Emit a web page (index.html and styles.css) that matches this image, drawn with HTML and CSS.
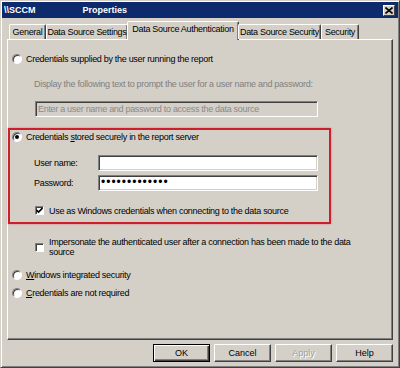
FILE: index.html
```html
<!DOCTYPE html>
<html lang="en">
<head>
    <meta charset="UTF-8">
    <title>\\SCCM Properties</title>
    <link rel="stylesheet" href="styles.css">
</head>
<body>
    <div class="window">
        <div class="titlebar">
            <span class="title-path">\\SCCM</span>
            <span class="title-text">Properties</span>
            <span class="close-btn">
                <svg width="8" height="7" viewBox="0 0 8 7"><path d="M0.5 0.5 L7.5 6.5 M7.5 0.5 L0.5 6.5" stroke="#000" stroke-width="1.6"/></svg>
            </span>
        </div>

        <div class="tabs">
            <div class="tab tab-general">General</div>
            <div class="tab tab-settings">Data Source Settings</div>
            <div class="tab tab-auth active">Data Source Authentication</div>
            <div class="tab tab-ds-security">Data Source Security</div>
            <div class="tab tab-security">Security</div>
        </div>

        <div class="panel">
            <div class="option">
                <span class="radio"></span>
                <span>Credentials supplied by the user running the report</span>
            </div>
            <div class="prompt-label">Display the following text to prompt the user for a user name and password:</div>
            <div class="textbox textbox-disabled">Enter a user name and password to access the data source</div>

            <!-- highlighted section -->
            <div class="highlight">
                <div class="option option-inner">
                    <span class="radio checked"></span>
                    <span>Credentials <u>s</u>tored securely in the report server</span>
                </div>
                <div class="field">
                    <label>User name:</label>
                    <div class="textbox textbox-field"></div>
                </div>
                <div class="field field-second">
                    <label>Password:</label>
                    <div class="textbox textbox-field"><span class="dots">&bull;&bull;&bull;&bull;&bull;&bull;&bull;&bull;&bull;&bull;&bull;&bull;&bull;</span></div>
                </div>
                <div class="check-row">
                    <span class="checkbox">
                        <svg width="7" height="7" viewBox="0 0 7 7"><path d="M0.5 3 L2.5 5 L6.5 1" stroke="#000" stroke-width="1.6" fill="none"/></svg>
                    </span>
                    <span>Use as Windows credentials when connecting to the data source</span>
                </div>
            </div>

            <div class="check-row check-row-wrap">
                <span class="checkbox"></span>
                <span class="wrap-text">Impersonate the authenticated user after a connection has been made to the data source</span>
            </div>

            <div class="option option-windows">
                <span class="radio"></span>
                <span><u>W</u>indows integrated security</span>
            </div>
            <div class="option option-none">
                <span class="radio"></span>
                <span><u>C</u>redentials are not required</span>
            </div>
        </div>

        <div class="buttons">
            <button class="btn btn-default">OK</button>
            <button class="btn">Cancel</button>
            <button class="btn" disabled>Apply</button>
            <button class="btn">Help</button>
        </div>
    </div>
</body>
</html>
```

FILE: styles.css
```css
* {
    margin: 0;
    padding: 0;
    box-sizing: border-box;
}

body {
    background: #d4d0c8;
    font-family: "Liberation Sans", Arial, sans-serif;
    font-size: 9px;
    letter-spacing: -0.3px;
    color: #000;
}

.window {
    width: 400px;
    height: 368px;
    background: #d4d0c8;
    border: 1px solid;
    border-color: #d4d0c8 #404040 #404040 #d4d0c8;
    box-shadow: inset 1px 1px #fff, inset -1px -1px #808080;
    padding: 1px;
    display: flex;
    flex-direction: column;
}

.titlebar {
    height: 16px;
    background: #0c2a6c;
    color: #fff;
    font-weight: bold;
    letter-spacing: 0;
    display: flex;
    align-items: center;
    padding: 0 3px 0 2px;
}

.title-text {
    margin-left: 47px;
}

.close-btn {
    margin-left: auto;
    width: 12px;
    height: 11px;
    background: #d4d0c8;
    border: 1px solid;
    border-color: #fff #404040 #404040 #fff;
    display: flex;
    align-items: center;
    justify-content: center;
}

.tabs {
    display: flex;
    align-items: flex-end;
    height: 18px;
    margin-top: 3px;
    padding-left: 7px;
    position: relative;
    z-index: 1;
}

.tab {
    height: 15px;
    line-height: 14px;
    text-align: center;
    border: 1px solid;
    border-bottom: none;
    border-color: #fff #404040 transparent #fff;
    box-shadow: inset -1px 0 #808080;
    border-radius: 2px 2px 0 0;
    white-space: nowrap;
}

.tab-general { width: 37px; }
.tab-settings { width: 82px; }
.tab-auth { width: 112px; }
.tab-ds-security { width: 83px; }
.tab-security { width: 38px; }

.tab.active {
    height: 19px;
    line-height: 15px;
    margin: 0 -1px -1px;
    background: #d4d0c8;
}

.panel {
    margin-left: 5px;
    width: 386px;
    height: 301px;
    border: 1px solid;
    border-color: #fff #404040 #404040 #fff;
    box-shadow: inset -1px -1px #808080;
    padding-top: 12px;
}

.option {
    display: flex;
    align-items: center;
    gap: 4px;
    height: 13px;
    padding-left: 4px;
    white-space: nowrap;
}

.option-inner {
    padding-left: 2px;
}

.option-windows {
    margin-top: 11px;
}

.option-none {
    margin-top: 5px;
}

.radio {
    width: 10px;
    height: 10px;
    flex: none;
    border-radius: 50%;
    background: #fff;
    border: 1px solid;
    border-color: #808080 #fff #fff #808080;
    box-shadow: inset 1px 1px #404040;
    display: flex;
    align-items: center;
    justify-content: center;
}

.radio.checked::after {
    content: "";
    width: 4px;
    height: 4px;
    border-radius: 50%;
    background: #000;
}

.prompt-label {
    margin: 13px 0 0 26px;
    height: 13px;
    line-height: 13px;
    color: #808080;
    white-space: nowrap;
}

.textbox {
    height: 16px;
    border: 1px solid;
    border-color: #808080 #fff #fff #808080;
    box-shadow: inset 1px 1px #404040, inset -1px -1px #d4d0c8;
    padding-left: 2px;
    line-height: 14px;
    white-space: nowrap;
    overflow: hidden;
}

.textbox-disabled {
    margin: 10px 0 0 27px;
    width: 283px;
    color: #8a8a8a;
    background: #d4d0c8;
}

.highlight {
    margin-top: 11px;
    width: 323px;
    height: 96px;
    border: 2px solid #cc1f2b;
    box-shadow: 0 0 2px rgba(230, 90, 100, 0.7);
}

.field {
    display: flex;
    align-items: center;
    margin-top: 12px;
    padding-left: 24px;
}

.field-second {
    margin-top: 4px;
}

.field label {
    width: 64px;
}

.textbox-field {
    width: 220px;
    background: #fff;
}

.dots {
    font-size: 12px;
    letter-spacing: 1px;
    line-height: 13px;
}

.check-row {
    display: flex;
    align-items: center;
    gap: 5px;
    height: 13px;
    margin-top: 13px;
    padding-left: 25px;
    white-space: nowrap;
}

.checkbox {
    width: 9px;
    height: 9px;
    flex: none;
    background: #fff;
    border: 1px solid;
    border-color: #808080 #fff #fff #808080;
    box-shadow: inset 1px 1px #404040;
    display: flex;
    align-items: center;
    justify-content: center;
}

.check-row-wrap {
    height: 20px;
    margin-top: 13px;
    padding-left: 27px;
    white-space: normal;
}

.wrap-text {
    width: 305px;
    line-height: 10px;
}

.buttons {
    display: flex;
    justify-content: flex-end;
    gap: 4px;
    margin-top: 4px;
    padding-right: 5px;
}

.btn {
    width: 57px;
    height: 18px;
    background: #d4d0c8;
    font: inherit;
    letter-spacing: 0;
    color: #000;
    border: 1px solid;
    border-color: #fff #404040 #404040 #fff;
    box-shadow: inset -1px -1px #808080;
}

.btn-default {
    border-color: #000;
    box-shadow: inset 1px 1px #fff, inset -1px -1px #404040, inset -2px -2px #808080;
}

.btn:disabled {
    color: #a0a0a0;
    text-shadow: 1px 1px #fff;
}
```
